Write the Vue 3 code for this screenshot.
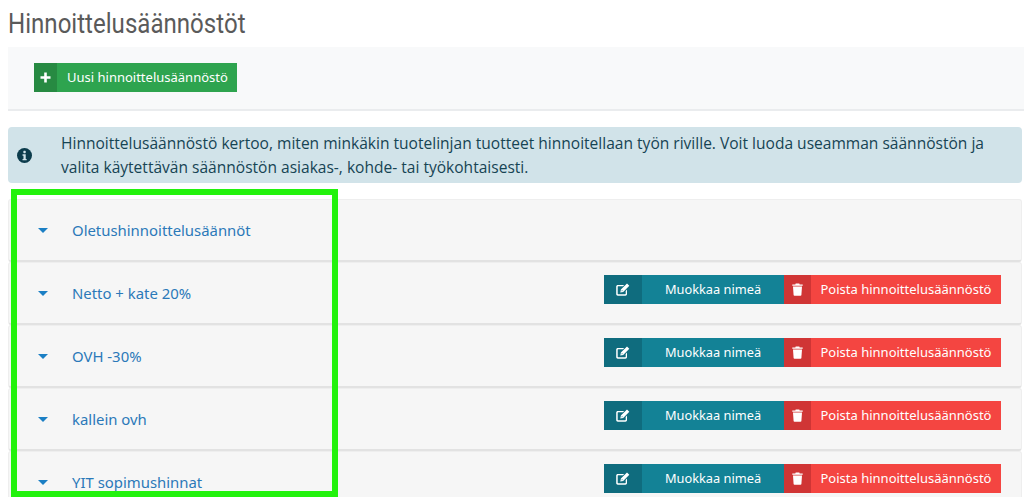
<script setup>
const rows = [
  { name: 'Oletushinnoittelusäännöt', actions: false },
  { name: 'Netto + kate 20%', actions: true },
  { name: 'OVH -30%', actions: true },
  { name: 'kallein ovh', actions: true },
  { name: 'YIT sopimushinnat', actions: true },
]
</script>

<template>
  <div class="page">
    <h1 class="title">Hinnoittelusäännöstöt</h1>
    <div class="toolbar">
      <button class="btn add">
        <span class="ico add-ico">
          <svg width="11" height="11" viewBox="0 0 11 11"><path d="M4.2 0.5h2.6v3.7h3.7v2.6H6.8v3.7H4.2V6.8H0.5V4.2h3.7z" fill="#fff"/></svg>
        </span>
        <span class="add-label">Uusi hinnoittelusäännöstö</span>
      </button>
    </div>
    <div class="alert">
      <svg class="info" width="15" height="15" viewBox="0 0 16 16">
        <circle cx="8" cy="8" r="8" fill="#0c3c4c"/>
        <rect x="6.8" y="3" width="2.5" height="2.5" rx="0.6" fill="#d1e3e9"/>
        <path d="M5.9 6.7h3.4v4.9h1v1.5H5.9v-1.5h1V8.2h-1z" fill="#d1e3e9"/>
      </svg>
      <p>Hinnoittelusäännöstö kertoo, miten minkäkin tuotelinjan tuotteet hinnoitellaan työn riville. Voit luoda useamman säännöstön ja valita käytettävän säännöstön asiakas-, kohde- tai työkohtaisesti.</p>
    </div>
    <div class="list">
      <div v-for="row in rows" :key="row.name" class="row">
        <span class="caret"></span>
        <a class="name">{{ row.name }}</a>
        <div v-if="row.actions" class="actions">
          <button class="btn edit">
            <span class="ico edit-ico">
              <svg width="14" height="13" viewBox="0 0 14 13">
                <path d="M1.8 2h6.4L6.9 3.3H2.2a.5.5 0 0 0-.5.5v6.9c0 .3.2.5.5.5h7c.3 0 .5-.2.5-.5V7.9L11 6.6v4.5c0 .9-.7 1.6-1.6 1.6H1.8C.9 12.7.2 12 .2 11.1V3.6C.2 2.7.9 2 1.8 2z" fill="#fff"/>
                <path d="M11 .5l2.3 2.3L7.2 8.9l-2.9.6.6-2.9zM5.9 7l-.3 1.2 1.2-.3z" fill="#fff"/>
              </svg>
            </span>
            <span class="edit-label">Muokkaa nimeä</span>
          </button>
          <button class="btn del">
            <span class="ico del-ico">
              <svg width="11" height="13" viewBox="0 0 11 13">
                <path d="M.3 1.5h3l.4-1h3.6l.4 1h3v1.3H.3zM1 3.6h9l-.6 8.4c0 .5-.4.8-.9.8h-6c-.5 0-.9-.3-.9-.8z" fill="#fff"/>
              </svg>
            </span>
            <span class="del-label">Poista hinnoittelusäännöstö</span>
          </button>
        </div>
      </div>
    </div>
    <div class="highlight"></div>
  </div>
</template>

<style>
html, body { margin: 0; overflow: hidden; background: #fff; }
</style>

<style scoped>
.page {
  position: relative;
  width: 1024px;
  height: 497px;
  overflow: hidden;
  box-sizing: border-box;
  padding: 0 2px 0 8px;
  font-family: "Noto Sans", sans-serif;
}
.title {
  margin: 0;
  height: 47px;
  padding-top: 8px;
  box-sizing: border-box;
  font: 400 27px/32px Roboto, sans-serif;
  color: #5a5a5a;
  transform: scaleX(0.892);
  transform-origin: left center;
  white-space: nowrap;
}
.toolbar {
  height: 64px;
  box-sizing: border-box;
  padding: 16px 26px;
  margin-right: -2px;
  background: #f8f9fa;
  border-bottom: 2px solid #eaecee;
}
.btn {
  display: flex;
  align-items: stretch;
  padding: 0;
  border: 0;
  color: #fff;
  font-family: "Noto Sans", sans-serif;
  font-size: 13px;
}
.ico { display: flex; align-items: center; justify-content: center; }
.add { width: 203px; height: 29px; background: #2ea44f; }
.add-ico { width: 23px; background: #278a42; }
.add-label { flex: 1; padding-left: 10px; line-height: 29px; text-align: left; font-size: 13px; }
.alert {
  display: flex;
  align-items: center;
  height: 56px;
  margin-top: 16px;
  box-sizing: border-box;
  background: #d1e3e9;
  border-radius: 4px;
  color: #164454;
}
.info { margin-left: 9px; flex: none; }
.alert p {
  margin: 0 0 0 29px;
  width: 940px;
  font: 400 15.55px/24px "Open Sans", sans-serif;
}
.list { margin-top: 16px; }
.row {
  display: flex;
  align-items: center;
  height: 63px;
  box-sizing: border-box;
  padding-left: 29px;
  background: #f6f6f6;
  border: 1px solid #eee;
  border-bottom: 2px solid #e2e2e2;
  border-radius: 3px;
}
.caret {
  width: 0;
  height: 0;
  border: 5px solid transparent;
  border-top: 5px solid #1b7fc4;
  border-bottom: 0;
  flex: none;
}
.name {
  margin-left: 24px;
  font-size: 14.9px;
  color: #2b79b9;
}
.actions { display: flex; margin-left: auto; margin-right: 20px; height: 29px; transform: translateY(-4px); }
.edit { width: 180px; background: #138296; }
.edit-ico { width: 38px; background: #0f6c7e; }
.edit-label { flex: 1; line-height: 28px; text-align: center; font-size: 12.8px; }
.del { width: 217px; background: #f44541; }
.del-ico { width: 27px; background: #d03535; }
.del-label { flex: 1; line-height: 28px; text-align: center; }
.highlight {
  position: absolute;
  left: 11px;
  top: 189px;
  width: 327px;
  height: 308px;
  box-sizing: border-box;
  border: 6px solid #22f20c;
}
</style>
